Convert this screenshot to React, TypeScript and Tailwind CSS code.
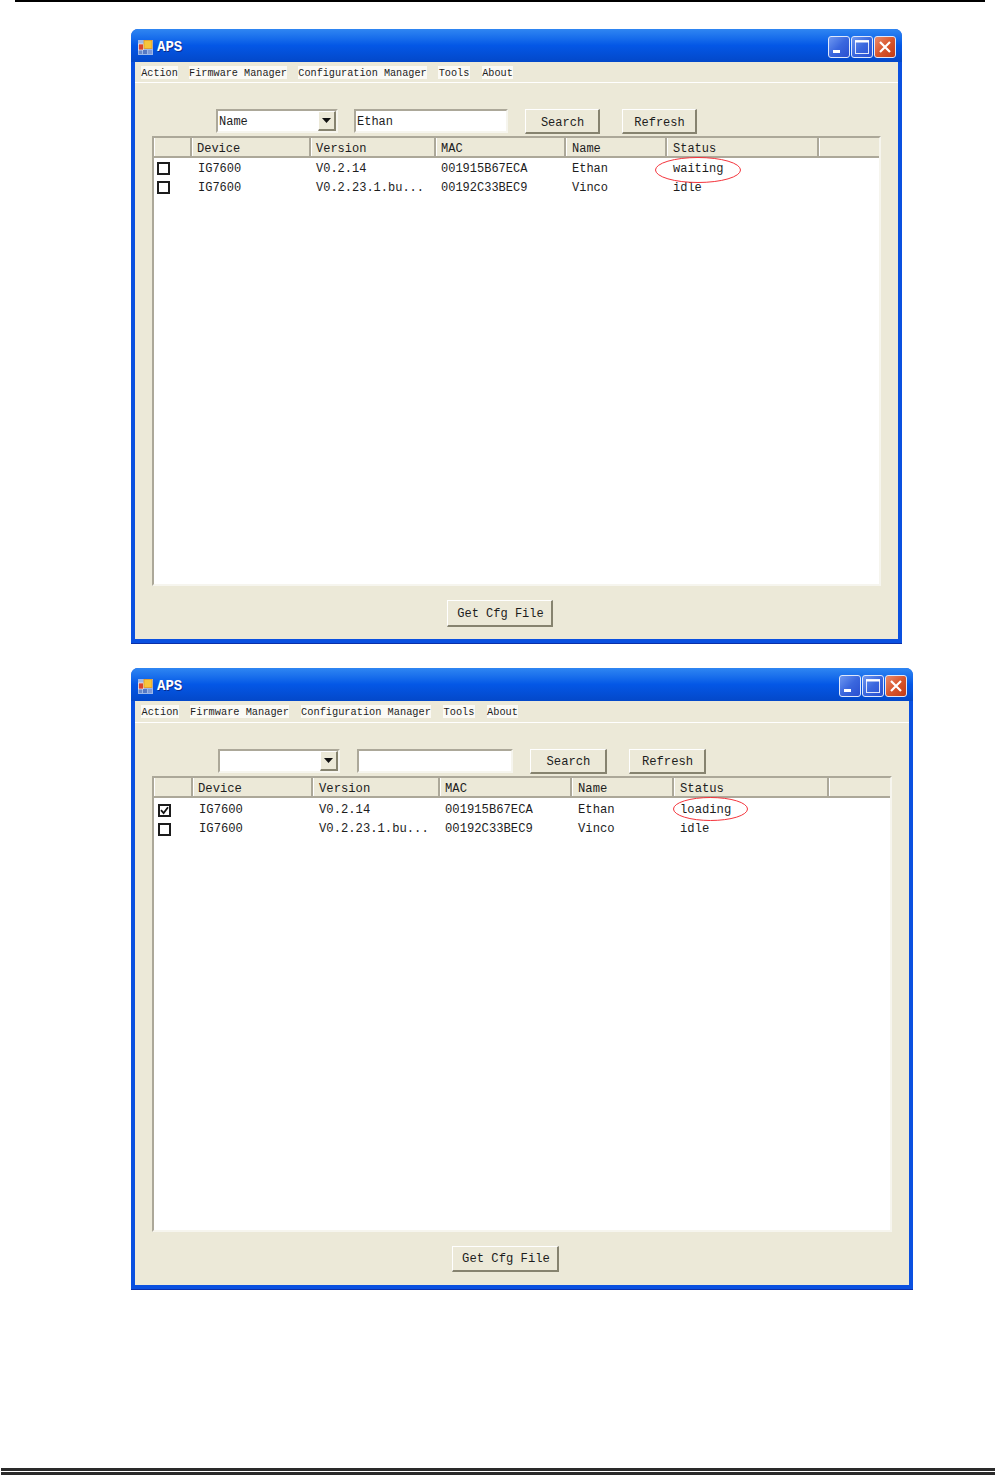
import React from "react";

const bevel = "border-t border-l border-t-white border-l-white border-r-2 border-b-2 border-r-[#86836f] border-b-[#86836f]";
const sunken = "border-t-2 border-l-2 border-t-[#aca899] border-l-[#aca899] border-r-2 border-b-2 border-r-[#f6f5ee] border-b-[#f6f5ee]";

function AppIcon() {
  return (
    <svg width="15" height="15" viewBox="0 0 15 15" className="shrink-0">
      <rect x="0" y="0" width="15" height="15" fill="#9db8e8" />
      <rect x="0.5" y="4" width="5" height="6" fill="#d8452f" stroke="#fff" strokeWidth="0.6" />
      <rect x="6" y="0.5" width="8" height="8" fill="#f5c63c" stroke="#e89a1c" strokeWidth="0.8" />
      <rect x="1" y="10.5" width="3" height="3.5" fill="#6a89c9" />
      <rect x="5" y="10" width="4" height="4" fill="#5578c4" />
      <rect x="10" y="10" width="4" height="4" fill="#7f9ad6" />
    </svg>
  );
}

function WinButton({ kind }: { kind: "min" | "max" | "close" }) {
  const bg =
    kind === "close"
      ? "bg-gradient-to-br from-[#e98a6a] via-[#d9562c] to-[#c23a14]"
      : "bg-gradient-to-br from-[#6f97f0] via-[#3a67de] to-[#2a4fd0]";
  return (
    <div className={`w-[22px] h-[22px] rounded-[3px] border border-[#dfe8fb] flex items-center justify-center ${bg}`}>
      <svg width="20" height="20" viewBox="0 0 20 20">
        {kind === "min" && <rect x="4" y="13" width="7" height="3" fill="#fff" />}
        {kind === "max" && (
          <g fill="none" stroke="#fff">
            <rect x="3.5" y="3.5" width="13" height="13" strokeOpacity="0.85" />
            <path d="M3 4.5h14" strokeWidth="2" />
          </g>
        )}
        {kind === "close" && <path d="M5 5l10 10M15 5L5 15" stroke="#fff" strokeWidth="2.2" />}
      </svg>
    </div>
  );
}

function Check({ checked }: { checked?: boolean }) {
  return (
    <div className="w-[13px] h-[13px] border-2 border-[#1c1c1c] bg-white flex items-center justify-center">
      {checked && (
        <svg width="9" height="9" viewBox="0 0 9 9">
          <path d="M1 4.2l2.6 2.8L8 1.2" fill="none" stroke="#111" strokeWidth="1.8" />
        </svg>
      )}
    </div>
  );
}

type Cfg = {
  win: string;
  body: string;
  menuH: string;
  menuGap: string[];
  menuFont: string;
  font: string;
  combo: string;
  input: string;
  search: string;
  refresh: string;
  listH: string;
  cols: string;
  getBtn: string;
  filter: string;
  query: string;
  checked: boolean;
  status: string;
  ellipse: string;
  ew: number;
  eh: number;
  rowPt: string;
  checkPl: string;
  rowPl: string[];
  headPl: string[];
};

const HEAD = ["", "Device", "Version", "MAC", "Name", "Status", ""];

function Win({ c }: { c: Cfg }) {
  const rows = [
    { check: c.checked, v: "V0.2.14", mac: "001915B67ECA", n: "Ethan", s: c.status },
    { check: false, v: "V0.2.23.1.bu...", mac: "00192C33BEC9", n: "Vinco", s: "idle" },
  ];
  const menu = ["Action", "Firmware Manager", "Configuration Manager", "Tools", "About"];
  return (
    <div className={`${c.win} ml-[131px] rounded-t-[7px] bg-[#0a50e0] flex flex-col shrink-0 border-b border-b-[#0a2fa8]`}>
      <div className="h-[33px] rounded-t-[7px] bg-gradient-to-b from-[#2f86f2] via-[#0457e6] to-[#0348c9] flex items-center pt-[3px] pl-[7px] pr-[6px]">
        <AppIcon />
        <span className="ml-[4px] font-['Liberation_Mono',monospace] text-[14px] font-bold text-white [text-shadow:1px_1px_0_#0a2a8a]">APS</span>
        <div className="ml-auto flex gap-[1px]">
          <WinButton kind="min" />
          <WinButton kind="max" />
          <WinButton kind="close" />
        </div>
      </div>
      <div className={`${c.body} mx-[4px] mb-[4px] bg-[#ece9d8] flex flex-col text-[#1d1d1d] font-['Liberation_Mono',monospace]`}>
        <div className={`${c.menuH} flex items-center pl-[6px] border-b border-b-white box-content`}>
          {menu.map((m, i) => (
            <span key={m} className={`${c.menuGap[i]} ${c.menuFont} h-[13px] leading-[15px] bg-[#fbfaf5] text-center whitespace-nowrap`}>{m}</span>
          ))}
        </div>
        <div className={`mt-[26px] h-[25px] flex ${c.font}`}>
          <div className={`${c.combo} h-[24px] ${sunken} bg-white flex items-center justify-between pl-[1px]`}>
            <span className="pt-[2px]">{c.filter}</span>
            <div className={`w-[18px] h-[20px] bg-[#ece9d8] ${bevel} flex items-center justify-center`}>
              <svg width="9" height="5" viewBox="0 0 9 5"><path d="M0 0h9L4.5 5z" fill="#111" /></svg>
            </div>
          </div>
          <div className={`${c.input} h-[24px] ${sunken} bg-white flex items-center pl-[1px] pt-[2px]`}>{c.query}</div>
          <div className={`${c.search} h-[25px] ${bevel} flex items-center justify-center pt-[3px] pl-[1px]`}>Search</div>
          <div className={`${c.refresh} h-[25px] ${bevel} flex items-center justify-center pt-[3px] pl-[1px]`}>Refresh</div>
        </div>
        <div className={`${c.listH} ${c.font} mt-[2px] mx-[17px] ${sunken} bg-white relative`}>
          <div className={`grid ${c.cols} h-[18px] bg-[#ece9d8] border-b-2 border-b-[#aca899] box-content`}>
            {HEAD.map((h, i) => (
              <div key={i} className={`${c.headPl[i]} h-[18px] pt-[2px] leading-[18px] border-l border-l-white ${i < 6 ? "border-r-2 border-r-[#aca899]" : ""}`}>{h}</div>
            ))}
          </div>
          <div className={c.rowPt}>
            {rows.map((r) => (
              <div key={r.mac} className={`grid ${c.cols} h-[19px] items-center`}>
                <div className={c.checkPl}><Check checked={r.check} /></div>
                <div className={c.rowPl[0]}>IG7600</div>
                <div className={`${c.rowPl[1]} whitespace-nowrap`}>{r.v}</div>
                <div className={c.rowPl[2]}>{r.mac}</div>
                <div className={c.rowPl[3]}>{r.n}</div>
                <div className={c.rowPl[4]}>{r.s}</div>
                <div />
              </div>
            ))}
          </div>
          <svg width={c.ew} height={c.eh} viewBox={`0 0 ${c.ew} ${c.eh}`} className={`absolute ${c.ellipse}`}>
            <ellipse cx={c.ew / 2} cy={c.eh / 2} rx={c.ew / 2 - 0.5} ry={c.eh / 2 - 0.5} fill="none" stroke="#f4343c" strokeWidth="1" />
          </svg>
        </div>
        <div className={`${c.getBtn} mt-[14px] ${bevel} ${c.font} flex items-center justify-center pt-[2px] pl-[2px]`}>Get Cfg File</div>
      </div>
    </div>
  );
}

const W1: Cfg = {
  win: "w-[771px] h-[615px] mt-[27px]",
  body: "h-[577px]",
  menuH: "h-[20px]",
  menuGap: ["w-[37px]", "w-[98px] ml-[11px]", "w-[129px] ml-[11px]", "w-[32px] ml-[11px]", "w-[31px] ml-[12px]"],
  menuFont: "text-[10.2px]",
  font: "text-[12px]",
  combo: "ml-[81px] w-[122px]",
  input: "ml-[16px] w-[154px]",
  search: "ml-[17px] w-[75px]",
  refresh: "ml-[22px] w-[75px]",
  listH: "h-[450px]",
  cols: "grid-cols-[38px_119px_125px_130px_101px_152px_1fr]",
  getBtn: "ml-[312px] w-[106px] h-[27px]",
  filter: "Name",
  query: "Ethan",
  checked: false,
  status: "waiting",
  ellipse: "left-[501px] top-[19px]",
  ew: 86,
  eh: 26,
  rowPt: "pt-[1px]",
  checkPl: "pl-[3px]",
  rowPl: ["pl-[6px]", "pl-[5px]", "pl-[5px]", "pl-[6px]", "pl-[6px]"],
  headPl: ["pl-[4px]", "pl-[4px]", "pl-[4px]", "pl-[4px]", "pl-[5px]", "pl-[5px]", "pl-[4px]"],
};

const W2: Cfg = {
  win: "w-[782px] h-[622px] mt-[24px]",
  body: "h-[584px]",
  menuH: "h-[21px]",
  menuGap: ["w-[38px]", "w-[99px] ml-[11px]", "w-[130px] ml-[12px]", "w-[32px] ml-[12px]", "w-[31px] ml-[12px]"],
  menuFont: "text-[10.3px]",
  font: "text-[12.2px]",
  combo: "ml-[83px] w-[122px]",
  input: "ml-[17px] w-[156px]",
  search: "ml-[17px] w-[77px]",
  refresh: "ml-[22px] w-[77px]",
  listH: "h-[456px] w-[740px]",
  cols: "grid-cols-[39px_120px_127px_132px_102px_155px_1fr]",
  getBtn: "ml-[317px] w-[107px] h-[26px]",
  filter: "",
  query: "",
  checked: true,
  status: "loading",
  ellipse: "left-[519px] top-[19px]",
  ew: 75,
  eh: 24,
  rowPt: "pt-[3px]",
  checkPl: "pl-[4px]",
  rowPl: ["pl-[6px]", "pl-[6px]", "pl-[5px]", "pl-[6px]", "pl-[6px]"],
  headPl: ["pl-[4px]", "pl-[4px]", "pl-[5px]", "pl-[4px]", "pl-[5px]", "pl-[5px]", "pl-[4px]"],
};

export default function App() {
  return (
    <div className="w-[996px] h-[1476px] bg-white flex flex-col overflow-hidden">
      <div className="ml-[15px] mr-[11px] h-[2px] bg-black shrink-0" />
      <Win c={W1} />
      <Win c={W2} />
      <div className="mt-auto mb-[1px] mx-[1px] flex flex-col gap-[1px]">
        <div className="h-[3px] bg-[#2a2a2a]" />
        <div className="h-[3px] bg-[#2a2a2a]" />
      </div>
    </div>
  );
}
